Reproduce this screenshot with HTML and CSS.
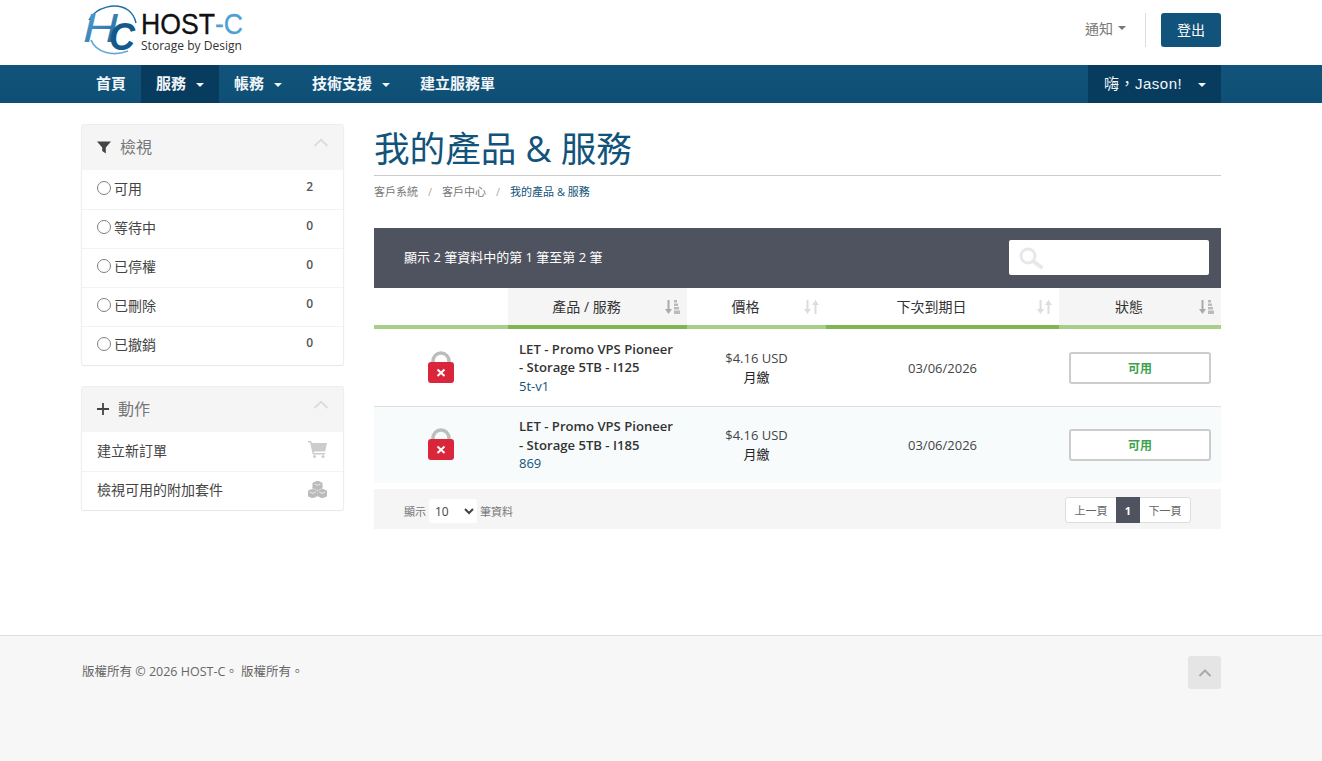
FILE: index.html
```html
<!DOCTYPE html>
<html lang="zh-Hant">
<head>
<meta charset="utf-8">
<title>我的產品 &amp; 服務</title>
<link rel="stylesheet" href="styles.css">
</head>
<body>
<header class="top">
  <div class="wrap top-in">
    <svg class="logo" viewBox="0 0 162 50" width="162" height="50" aria-label="HOST-C">
      <defs>
        <linearGradient id="sw" x1="0" y1="0" x2="1" y2="1"><stop offset="0" stop-color="#5aa3d6"/><stop offset="1" stop-color="#1c6497"/></linearGradient>
      </defs>
      <path d="M7 15 C14 2 34 -3 46 5 C50 8 53 13 54 18" fill="none" stroke="#1f6ea6" stroke-width="1.500"/>
      <path d="M9 35 C14 47 30 52 46 46" fill="none" stroke="#6aa8d2" stroke-width="1.800"/>
      <text class="logo-hc" x="1" y="37" fill="url(#sw)" textLength="35" lengthAdjust="spacingAndGlyphs">H</text>
      <text class="logo-hc2" x="27" y="45" textLength="26" lengthAdjust="spacingAndGlyphs">C</text>
      <text class="logo-host" x="59" y="29" textLength="74" lengthAdjust="spacingAndGlyphs">HOST</text>
      <text class="logo-c" x="133" y="29" textLength="28" lengthAdjust="spacingAndGlyphs">-C</text>
      <text class="logo-sub" x="59" y="45" textLength="101" lengthAdjust="spacingAndGlyphs">Storage by Design</text>
    </svg>
    <div class="top-right">
      <a class="notice">通知<span class="caret"></span></a>
      <span class="divider"></span>
      <a class="logout">登出</a>
    </div>
  </div>
</header>
<nav class="nav">
  <div class="wrap nav-in">
    <ul class="nav-list">
      <li class="nav-item">首頁</li>
      <li class="nav-item active">服務<span class="caret gap"></span></li>
      <li class="nav-item">帳務<span class="caret gap"></span></li>
      <li class="nav-item">技術支援<span class="caret gap"></span></li>
      <li class="nav-item">建立服務單</li>
    </ul>
    <div class="nav-item active user"><span class="user-name">嗨&#xFF0C;Jason!</span><span class="caret gap2"></span></div>
  </div>
</nav>
<div class="wrap content">
  <aside class="side">
    <section class="panel">
      <div class="panel-head">
        <svg class="head-icon" viewBox="0 0 14 14" width="14" height="14"><path d="M0 1.500h14L8.800 7.600V13.500L5.200 11V7.600z" fill="#444"/></svg>
        <span class="head-title">檢視</span>
        <svg class="chev" viewBox="0 0 16 9" width="16" height="9"><path d="M1.500 8L8 1.800 14.500 8" fill="none" stroke="#dcdcdc" stroke-width="1.800"/></svg>
      </div>
      <div class="row"><span class="radio"></span>可用<span class="count">2</span></div>
      <div class="row"><span class="radio"></span>等待中<span class="count">0</span></div>
      <div class="row"><span class="radio"></span>已停權<span class="count">0</span></div>
      <div class="row"><span class="radio"></span>已刪除<span class="count">0</span></div>
      <div class="row"><span class="radio"></span>已撤銷<span class="count">0</span></div>
    </section>
    <section class="panel">
      <div class="panel-head">
        <svg class="head-icon" viewBox="0 0 12 12" width="12" height="12"><path d="M6 0v12M0 6h12" stroke="#444" stroke-width="1.800"/></svg>
        <span class="head-title">動作</span>
        <svg class="chev" viewBox="0 0 16 9" width="16" height="9"><path d="M1.500 8L8 1.800 14.500 8" fill="none" stroke="#dcdcdc" stroke-width="1.800"/></svg>
      </div>
      <div class="row link">建立新訂單
        <svg class="row-icon" viewBox="0 0 19 17" width="19" height="17"><path d="M0 0h3.200l.6 2H19l-1.800 8.500H5.800l.4 1.500h11v1.600H4.800L2 1.600H0z" fill="#ccc"/><circle cx="6.500" cy="15.500" r="1.500" fill="#ccc"/><circle cx="15" cy="15.500" r="1.500" fill="#ccc"/></svg>
      </div>
      <div class="row link">檢視可用的附加套件
        <svg class="row-icon" viewBox="0 0 19 17" width="19" height="17"><path d="M9.500 0l4.600 2v5l-4.600 2-4.600-2V2zM4.800 8l4.400 2v5l-4.400 2L0 15v-5zM14.200 8l4.800 2v5l-4.800 2-4.400-2v-5z" fill="#bbb" stroke="#bbb" stroke-width=".8" stroke-linejoin="round"/><path d="M6.500 3l3 1.300 3-1.300M1.800 11l3 1.300 3-1.300M11.200 11l3 1.300 3-1.300" fill="none" stroke="#fff" stroke-width=".7"/></svg>
      </div>
    </section>
  </aside>
  <main class="main">
    <h1 class="title">我的產品 &amp; 服務</h1>
    <ol class="crumbs">
      <li>客戶系統</li><li class="sep">/</li><li>客戶中心</li><li class="sep">/</li><li class="current">我的產品 &amp; 服務</li>
    </ol>
    <div class="toolbar">
      <span class="info">顯示 2 筆資料中的第 1 筆至第 2 筆</span>
      <label class="search">
        <svg viewBox="0 0 24 22" width="24" height="22"><circle cx="9" cy="9" r="7" fill="none" stroke="#e6e8ea" stroke-width="3"/><path d="M14 14l8 6" stroke="#e6e8ea" stroke-width="4" stroke-linecap="round"/></svg>
      </label>
    </div>
    <table class="tbl">
      <colgroup><col class="c1"><col class="c2"><col class="c3"><col class="c4"><col class="c5"></colgroup>
      <thead>
        <tr>
          <th></th>
          <th class="sorted"><span class="th-text">產品 / 服務</span>
            <svg class="sort" viewBox="0 0 15 14" width="15" height="14"><path d="M3.500 0v10" stroke="#aaa" stroke-width="2"/><path d="M0 9h7l-3.500 5z" fill="#aaa"/><path d="M9 0h3v2.500H9zM9 3.500h4V6H9zM9 7h5v2.500H9zM9 10.500h6V14H9z" fill="#bbb"/></svg></th>
          <th class="dim"><span class="th-text">價格</span>
            <svg class="sort" viewBox="0 0 15 14" width="15" height="14"><path d="M3.500 0v10M11.500 14V4" stroke="#ddd" stroke-width="2"/><path d="M0 9h7l-3.500 5zM8 5h7l-3.500-5z" fill="#ddd"/></svg></th>
          <th><span class="th-text">下次到期日</span>
            <svg class="sort" viewBox="0 0 15 14" width="15" height="14"><path d="M3.500 0v10M11.500 14V4" stroke="#ddd" stroke-width="2"/><path d="M0 9h7l-3.500 5zM8 5h7l-3.500-5z" fill="#ddd"/></svg></th>
          <th class="sorted dim"><span class="th-text">狀態</span>
            <svg class="sort" viewBox="0 0 15 14" width="15" height="14"><path d="M3.500 0v10" stroke="#aaa" stroke-width="2"/><path d="M0 9h7l-3.500 5z" fill="#aaa"/><path d="M9 0h3v2.500H9zM9 3.500h4V6H9zM9 7h5v2.500H9zM9 10.500h6V14H9z" fill="#bbb"/></svg></th>
        </tr>
      </thead>
      <tbody>
        <tr>
          <td class="center"><svg class="lock" viewBox="0 0 26 32" width="26" height="32"><path d="M5 14V10.500C5 5.500 8.500 2 13 2s8 3.500 8 8.500V14" fill="none" stroke="#bdbdbd" stroke-width="3.500"/><rect y="11" width="26" height="21" rx="3" fill="#d9263a"/><path d="M9.500 18.500l7 6.500M16.500 18.500l-7 6.500" stroke="#fff" stroke-width="2"/></svg></td>
          <td class="prod"><strong>LET - Promo VPS Pioneer - Storage 5TB - I125</strong><a class="host">5t-v1</a></td>
          <td class="center price">$4.16 USD<br><span class="cycle">月繳</span></td>
          <td class="center date">03/06/2026</td>
          <td><span class="status">可用</span></td>
        </tr>
        <tr class="alt">
          <td class="center"><svg class="lock" viewBox="0 0 26 32" width="26" height="32"><path d="M5 14V10.500C5 5.500 8.500 2 13 2s8 3.500 8 8.500V14" fill="none" stroke="#bdbdbd" stroke-width="3.500"/><rect y="11" width="26" height="21" rx="3" fill="#d9263a"/><path d="M9.500 18.500l7 6.500M16.500 18.500l-7 6.500" stroke="#fff" stroke-width="2"/></svg></td>
          <td class="prod"><strong>LET - Promo VPS Pioneer - Storage 5TB - I185</strong><a class="host">869</a></td>
          <td class="center price">$4.16 USD<br><span class="cycle">月繳</span></td>
          <td class="center date">03/06/2026</td>
          <td><span class="status">可用</span></td>
        </tr>
      </tbody>
    </table>
    <div class="tfoot">
      <div class="len">顯示<select class="len-sel"><option>10</option></select>筆資料</div>
      <div class="pager"><a class="pg">上一頁</a><a class="pg on">1</a><a class="pg">下一頁</a></div>
    </div>
  </main>
</div>
<footer class="foot">
  <div class="wrap foot-in">
    <p class="copy">版權所有 © 2026 HOST-C。 版權所有。</p>
    <a class="totop"><svg viewBox="0 0 14 8" width="14" height="8"><path d="M1.500 7L7 1.500 12.500 7" fill="none" stroke="#aaa" stroke-width="2"/></svg></a>
  </div>
</footer>
</body>
</html>
```
FILE: styles.css
```css
* { box-sizing: border-box; }
html, body { margin: 0; padding: 0; }
body {
  font-family: "Open Sans", "Noto Sans CJK TC", sans-serif;
  font-size: 14px;
  color: #333;
  background: #fff;
  height: 761px;
  overflow: hidden;
}
.wrap { width: 1139px; margin-left: 82px; }

.top { height: 65px; }
.top-in { display: flex; justify-content: space-between; align-items: flex-start; }
.logo { margin-top: 5px; display: block; overflow: visible; }
.logo-hc { font: italic 400 41px "Liberation Sans", sans-serif; }
.logo-hc2 { font: italic 700 38px "Liberation Sans", sans-serif; fill: #14598b; }
.logo-host { font: 400 29px "Liberation Sans", sans-serif; fill: #111; stroke: #111; stroke-width: .3px; }
.logo-c { font: 400 29px "Liberation Sans", sans-serif; fill: #4f9fd4; stroke: #4f9fd4; stroke-width: .3px; }
.logo-sub { font: 400 12.5px "Open Sans", sans-serif; fill: #333; }
.top-right { display: flex; align-items: center; margin-top: 13px; height: 34px; }
.notice { color: #777; font-size: 14px; display: flex; align-items: center; margin-top: -4px; }
.caret {
  display: inline-block;
  width: 0; height: 0;
  margin-left: 5px;
  border-top: 4px solid currentColor;
  border-left: 4px solid transparent;
  border-right: 4px solid transparent;
}
.divider { width: 1px; height: 34px; background: #ddd; margin: 0 15px 0 19px; }
.logout {
  width: 60px; height: 34px;
  display: flex; align-items: center; justify-content: center;
  background: #11537a; color: #fff;
  border-radius: 3px; font-size: 14px;
  padding-bottom: 2px;
}

.nav { height: 38px; background: linear-gradient(#11537a, #0f4f76); color: #f2f6f9; }
.nav-in { display: flex; justify-content: space-between; }
.nav-list { display: flex; list-style: none; margin: 0 0 0 -1px; padding: 0; }
.nav-item {
  height: 38px; padding: 0 15px 4px;
  display: flex; align-items: center;
  font-weight: 700; font-size: 15px;
}
.nav-item.active { background: #073c5e; }
.caret.gap { margin-left: 10px; margin-top: 6px; }
.caret.gap2 { margin-left: 16px; margin-top: 6px; }
.user { width: 133px; padding-left: 16px; font-weight: 400; white-space: nowrap; }
.user-name { font-family: "Liberation Sans", "Noto Sans CJK TC", sans-serif; font-size: 15px; letter-spacing: .5px; white-space: nowrap; }

.content { display: flex; gap: 30px; height: 532px; padding-top: 21px; }
.side { width: 262px; flex: none; }
.main { width: 847px; flex: none; }

.panel {
  background: #fff;
  border: 1px solid #eee;
  border-bottom: 0;
  border-radius: 3px;
  box-shadow: 0 1px 1px rgba(0,0,0,.1);
  margin-bottom: 21px;
  margin-left: -1px;
  width: 263px;
}
.panel-head {
  height: 45px; background: #f5f5f5;
  display: flex; align-items: center;
  padding: 0 15px 4px;
  color: #777; font-size: 16px;
}
.head-icon { margin-right: 9px; flex: none; margin-top: 2px; }
.head-title { flex: 1; }
.chev { margin-top: -6px; margin-right: -1px; }
.row {
  height: 39px; border-top: 1px solid #f3f3f3;
  display: flex; align-items: center;
  padding: 0 15px 4px;
  font-size: 14px; color: #444;
}
.panel-head + .row { border-top: 0; }
.row.link { justify-content: space-between; }
.radio {
  width: 14px; height: 14px; flex: none;
  border: 1.600px solid #808080; border-radius: 50%;
  margin-right: 3px; background: #fff;
}
.count { margin-left: auto; margin-right: 15px; font-size: 12px; font-weight: 600; color: #555; margin-top: -3px; }
.row-icon { margin-right: 1px; }

.title { margin: 0; height: 52px; font-weight: 400; font-size: 35.600px; line-height: 48px; color: #11537a; border-bottom: 1px solid #ccc; white-space: nowrap; }
.crumbs { list-style: none; display: flex; margin: 0; padding: 8px 0 0; height: 52px; font-size: 11px; line-height: 15px; color: #777; }
.crumbs .sep { margin: 0 10px; color: #aaa; }
.crumbs .current { color: #11537a; }

.toolbar {
  height: 60px; background: #4f5360;
  display: flex; align-items: center; justify-content: space-between;
  padding: 0 12px 1px 30px;
}
.info { color: #fff; font-size: 13px; padding-bottom: 2px; }
.search {
  width: 200px; height: 35px; background: #fff; border-radius: 2px;
  display: flex; align-items: center; padding-left: 10px;
}

.tbl { width: 847px; border-collapse: separate; border-spacing: 0; table-layout: fixed; }
.c1 { width: 134px; } .c2 { width: 179px; } .c3 { width: 139px; } .c4 { width: 233px; } .c5 { width: 162px; }
.tbl th {
  height: 41px; padding: 0 22px 2px 0; position: relative;
  font-weight: 400; font-size: 14px; color: #333; text-align: center;
  border-bottom: 4px solid #7fb651;
  background: #fff;
}
.tbl th:first-child, .tbl th.dim { border-bottom-color: #a7cf89; }
.tbl th.sorted { background: #f5f5f5; }
.sort { position: absolute; right: 7px; top: 12px; }
.tbl td { height: 78px; padding: 0 10px; border-bottom: 1px solid #ddd; vertical-align: middle; }
.tbl tr.alt td { background: #f7fbfc; height: 76px; border-bottom: 0; }
.center { text-align: center; }
.lock { display: block; margin: 0 auto; position: relative; top: -1px; }
.tbl td.prod { font-size: 13.100px; line-height: 18.500px; padding: 0 12px 0 11px; }
.prod strong { display: block; font-weight: 600; color: #333; }
.host { display: block; color: #11537a; font-size: 13px; }
.price { font-size: 13px; line-height: 19px; color: #444; }
.cycle { color: #222; font-size: 13px; }
.date { font-size: 13px; color: #444; }
.status {
  display: block; width: 142px; height: 32px;
  border: 2px solid #ccc; border-radius: 3px; background: #fff;
  text-align: center; line-height: 29px;
  color: #3ea34f; font-weight: 700; font-size: 12px;
}

.tfoot {
  margin-top: 6px; height: 40px; background: #f5f5f5;
  display: flex; align-items: center; justify-content: space-between;
  padding: 0 30px;
}
.len { display: flex; align-items: center; font-size: 11px; color: #777; padding-top: 4px; }
.len-sel {
  width: 48px; height: 24px; margin: 0 3px;
  border: 0; border-radius: 3px; background: #fff; color: #444;
  font: 12px "Open Sans", sans-serif; padding-left: 2px;
}
.pager { display: flex; height: 26px; margin-top: 2px; border: 1px solid #ddd; border-radius: 3px; background: #fff; }
.pg { display: flex; align-items: center; justify-content: center; width: 50px; font-size: 11px; color: #666; }
.pg.on { width: 24px; background: #4f5360; color: #fff; font-weight: 700; height: 26px; margin-top: -1px; }

.foot { height: 126px; background: #f7f7f7; border-top: 1px solid #ddd; }
.foot-in { display: flex; justify-content: space-between; padding-top: 20px; }
.copy { margin: 7px 0 0; font-size: 12.5px; line-height: 18px; color: #666; }
.totop {
  width: 33px; height: 33px; background: #e5e5e5; border-radius: 3px;
  display: flex; align-items: center; justify-content: center;
}
```
